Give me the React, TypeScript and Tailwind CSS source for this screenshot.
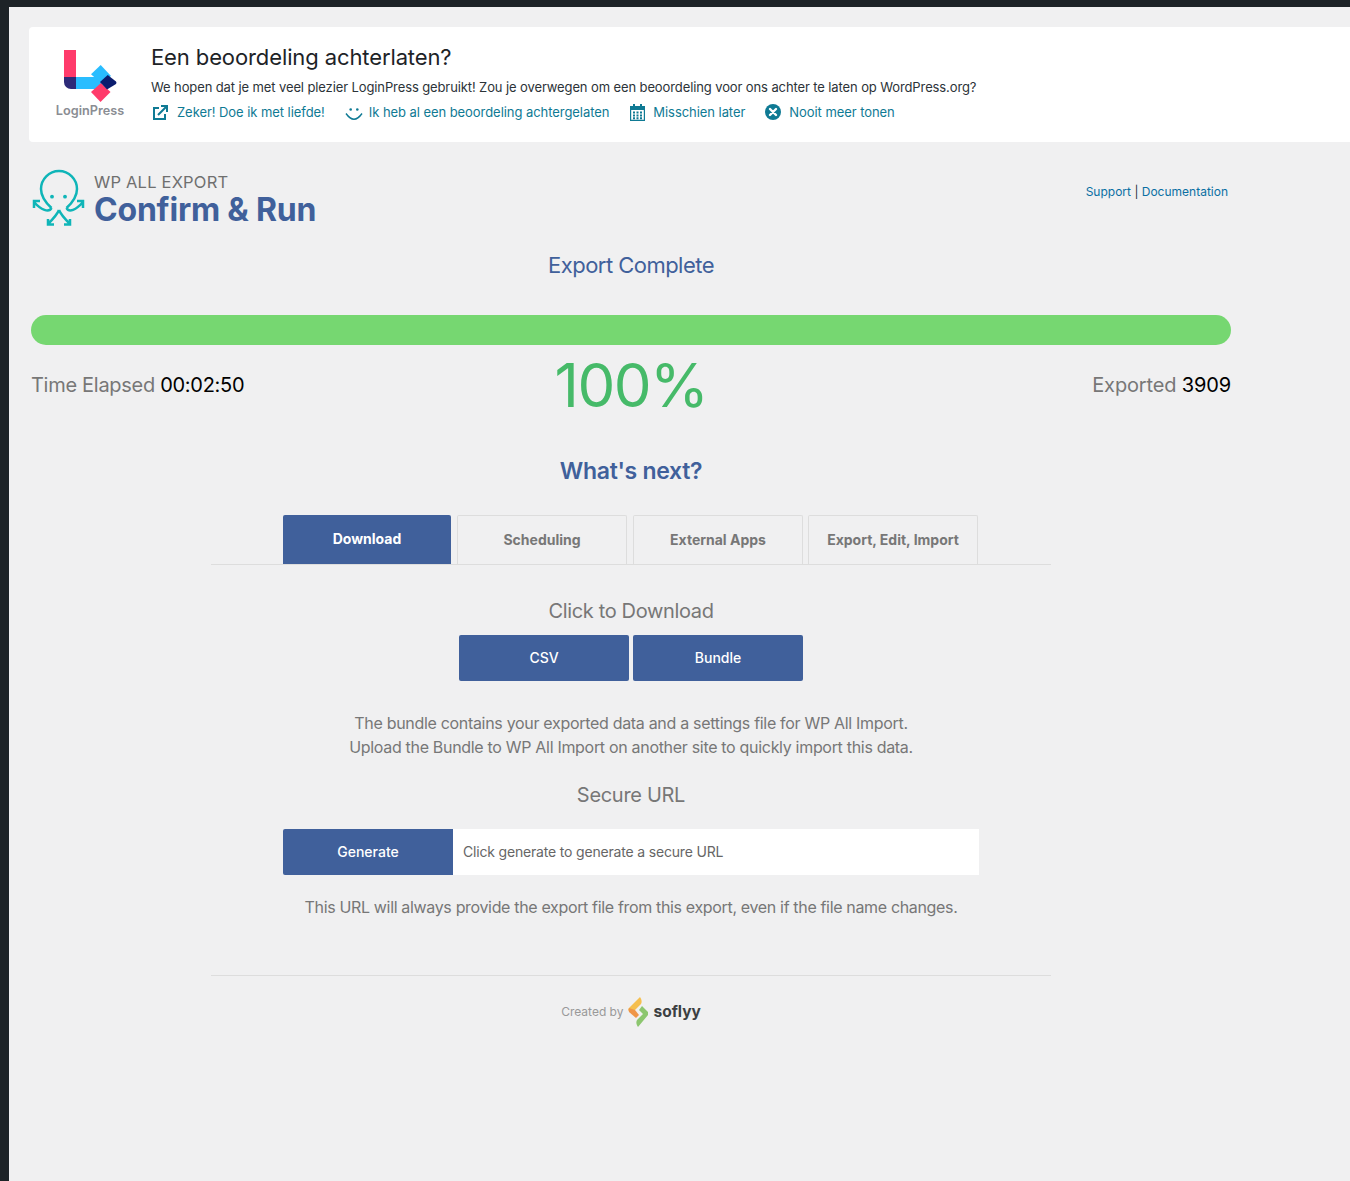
import React from 'react';

const font = "font-['Inter','Liberation_Sans',sans-serif]";

function LoginPressLogo() {
  return (
    <svg width="54" height="54" viewBox="0 0 54 54" className="block">
      <path d="M0 0h12v27H0z" fill="#ff3b6b" />
      <path d="M0 27h12v12H7a7 7 0 0 1-7-7z" fill="#2d2a78" />
      <path d="M12 27h26v12H12z" fill="#29bdff" />
      <path d="M27 24.3L36.7 15 47 26 37 33z" fill="#29bdff" />
      <path d="M27 42l9.5 10 10-10L37 33z" fill="#ff3b6b" />
      <path d="M43.7 25l8.300 6.500a2 2 0 0 1 0 2.500L43 39.500 36 32z" fill="#0b1d6e" />
    </svg>
  );
}

function ExternalIcon() {
  return (
    <svg width="15" height="15" viewBox="0 0 15 15" fill="none" stroke="#0f7a94" strokeWidth="2">
      <path d="M6 3H1v11h11V9" />
      <path d="M5 10l8-8M8 1h6v6" />
    </svg>
  );
}

function SmileIcon() {
  return (
    <svg width="18" height="13" viewBox="0 0 18 13" fill="none" stroke="#0f7a94" className="mt-[4px]">
      <circle cx="5.700" cy="1.500" r="1.300" fill="#0f7a94" stroke="none" />
      <circle cx="12.300" cy="1.500" r="1.300" fill="#0f7a94" stroke="none" />
      <path d="M1 5.500Q9 17 17 5.500" strokeWidth="1.400" />
    </svg>
  );
}

function CalendarIcon() {
  return (
    <svg width="17" height="18" viewBox="0 0 17 18" fill="#0f7a94">
      <path d="M1 3h15v15H1zM2.200 7v9.800h12.600V7z" fillRule="evenodd" />
      <path d="M4 1h2v4H4zM11 1h2v4h-2z" />
      <path d="M4 8.500h2v2H4zM7.500 8.500h2v2h-2zM11 8.500h2v2h-2zM4 11.500h2v2H4zM7.500 11.500h2v2h-2zM11 11.500h2v2h-2zM4 14.200h2v2H4zM7.500 14.200h2v2h-2zM11 14.200h2v2h-2z" />
    </svg>
  );
}

function CloseCircleIcon() {
  return (
    <svg width="16" height="16" viewBox="0 0 16 16">
      <circle cx="8" cy="8" r="8" fill="#0f7a94" />
      <path d="M5 5l6 6M11 5l-6 6" stroke="#fff" strokeWidth="2.400" strokeLinecap="round" />
    </svg>
  );
}

function OctopusLogo() {
  return (
    <svg width="56" height="60" viewBox="0 -1 56 60" fill="none" stroke="#0fb5b8" strokeWidth="2.500" className="block">
      <path d="M20.500 39C15 34 10 28 10 20a18 18 0 0 1 36 0c0 8-5 14-10.500 19" />
      <circle cx="21" cy="27.700" r="1.900" fill="#0fb5b8" stroke="none" />
      <circle cx="34" cy="27.700" r="1.900" fill="#0fb5b8" stroke="none" />
      <path d="M20.500 39C18 44 10 41 3 33M3 39v-7h6" />
      <path d="M35.500 39C38 44 45 41 52 33M52 39v-7h-6" />
      <path d="M28 41c-2 5-6 9-11 14M17 50v5.500h6" />
      <path d="M28 41c2 5 6 9 11 14M39 50v5.500h-6" />
    </svg>
  );
}

function SoflyyLogo() {
  return (
    <svg width="20" height="32" viewBox="0 0 20 32" className="block">
      <path d="M12 1c2 3 2 5 1 7L7 14 1 15c-1-1-1-2 0-3z" fill="#f5bf4f" />
      <path d="M1 12l6 2 4 5-3 3-7-6c-.5-1-.5-3 0-4z" fill="#ef9648" />
      <path d="M14 10l6 6c.5 1 .5 2 0 3L10 31c-2-3-2-5-1-7l6-6-4-4z" fill="#8cc66f" />
    </svg>
  );
}

const actions = [
  { icon: <ExternalIcon />, label: 'Zeker! Doe ik met liefde!', gap: 'gap-[9px]' },
  { icon: <SmileIcon />, label: 'Ik heb al een beoordeling achtergelaten', gap: 'gap-[6px]' },
  { icon: <CalendarIcon />, label: 'Misschien later', gap: 'gap-[7px]' },
  { icon: <CloseCircleIcon />, label: 'Nooit meer tonen', gap: 'gap-[8px]' },
];

const tabs = [
  { label: 'Download', cls: 'w-[168px] bg-[#40609b] text-white' },
  { label: 'Scheduling', cls: 'ml-[6px] w-[170px] border border-b-0 border-[#ddd] text-[#777]' },
  { label: 'External Apps', cls: 'ml-[6px] w-[170px] border border-b-0 border-[#ddd] text-[#777]' },
  { label: 'Export, Edit, Import', cls: 'ml-[5px] w-[170px] border border-b-0 border-[#ddd] text-[#777]' },
];

export default function App() {
  return (
    <div className={`${font} min-h-[1181px] bg-[#f0f0f1] border-t-[7px] border-l-[9px] border-[#1d2327] antialiased overflow-hidden`}>
      {/* review notice */}
      <div className="mt-[20px] ml-[20px] h-[115px] bg-white rounded-l-[4px] flex">
        <div className="w-[122px] shrink-0 flex flex-col items-center pt-[23px]">
          <div className="ml-[2px] w-[54px]"><LoginPressLogo /></div>
          <span className="-mt-[1px] text-[12.700px] leading-[16px] font-semibold text-[#8a8d93]">LoginPress</span>
        </div>
        <div className="pt-[16px]">
          <h2 className="text-[22px] leading-[28px] tracking-[-0.11px] text-[#1d2327]">Een beoordeling achterlaten?</h2>
          <p className="mt-[7px] text-[13px] leading-[18px] tracking-[-0.11px] text-[#2c3338]">
            We hopen dat je met veel plezier LoginPress gebruikt! Zou je overwegen om een beoordeling voor ons achter te laten op WordPress.org?
          </p>
          <div className="mt-[6px] ml-[2px] flex gap-[20px] text-[13px] leading-[20px] tracking-[-0.06px] text-[#0f7a94]">
            {actions.map((a) => (
              <span key={a.label} className={`flex items-center ${a.gap}`}>
                {a.icon}
                {a.label}
              </span>
            ))}
          </div>
        </div>
      </div>

      {/* plugin page */}
      <div className="ml-[22px] w-[1200px]">
        <div className="mt-[26px] flex justify-between">
          <div className="flex">
            <OctopusLogo />
            <div className="ml-[7px] pt-[4px]">
              <div className="text-[16.500px] leading-[20px] tracking-[0.2px] text-[#6f6f6f]">WP ALL EXPORT</div>
              <h1 className="text-[32px] leading-[36px] font-bold tracking-[-0.2px] text-[#40609b]">Confirm &amp; Run</h1>
            </div>
          </div>
          <div className="pt-[16px] pr-[3px] text-[12px] leading-[16px] text-[#2c3338]">
            <span className="text-[#0a6fa3]">Support</span> | <span className="text-[#0a6fa3]">Documentation</span>
          </div>
        </div>

        <div className="mt-[22px] text-center text-[22px] leading-[30px] tracking-[-0.53px] text-[#40609b]">Export Complete</div>

        <div className="mt-[35px] h-[30px] rounded-[15px] bg-[#76d771]" />

        <div className="mt-[4px] h-[72px] flex items-center justify-between text-[20px]">
          <div className="w-[300px] tracking-[-0.29px] text-[#777]">Time Elapsed <span className="text-black">00:02:50</span></div>
          <div className="text-[60px] leading-[72px] tracking-[-1.500px] text-[#46ba69]">100%</div>
          <div className="w-[300px] text-right tracking-[-0.15px] text-[#777]">Exported <span className="text-black">3909</span></div>
        </div>

        <h3 className="mt-[35px] text-center text-[23px] leading-[30px] font-semibold tracking-[-0.3px] text-[#40609b]">What's next?</h3>

        <div className="mx-auto mt-[29px] w-[840px] border-b border-[#ddd] h-[50px] flex justify-center pr-[1px]">
          {tabs.map((t) => (
            <div key={t.label} className={`h-[49px] pb-[2px] flex items-center justify-center rounded-t-[2px] text-[14px] font-bold ${t.cls}`}>
              {t.label}
            </div>
          ))}
        </div>

        <div className="mt-[32px] text-center text-[20px] leading-[28px] tracking-[-0.35px] text-[#777]">Click to Download</div>
        <div className="mt-[10px] flex justify-center gap-[4px]">
          <div className="w-[170px] h-[46px] pb-[1px] flex items-center justify-center rounded-[2px] bg-[#40609b] text-white text-[14px] font-medium">CSV</div>
          <div className="w-[170px] h-[46px] pb-[1px] flex items-center justify-center rounded-[2px] bg-[#40609b] text-white text-[14px] font-medium">Bundle</div>
        </div>

        <p className="mt-[30px] text-center text-[16px] leading-[24px] tracking-[-0.31px] text-[#777]">
          The bundle contains your exported data and a settings file for WP All Import.<br />
          Upload the Bundle to WP All Import on another site to quickly import this data.
        </p>

        <div className="mt-[22px] text-center text-[20px] leading-[28px] tracking-[-0.3px] text-[#777]">Secure URL</div>

        <div className="mt-[20px] mx-auto w-[696px] h-[46px] flex">
          <div className="w-[170px] pb-[1px] flex items-center justify-center rounded-l-[2px] bg-[#40609b] text-white text-[14px] font-medium">Generate</div>
          <div className="flex-1 pb-[1px] flex items-center bg-white pl-[10px] text-[14px] tracking-[-0.18px] text-[#666]">Click generate to generate a secure URL</div>
        </div>

        <p className="mt-[20px] text-center text-[16px] leading-[24px] tracking-[-0.34px] text-[#777]">
          This URL will always provide the export file from this export, even if the file name changes.
        </p>

        <div className="mx-auto mt-[56px] w-[840px] border-t border-[#ddd] pt-[20px] flex items-center justify-center">
          <span className="text-[12px] text-[#999]">Created by</span>
          <span className="ml-[5px]"><SoflyyLogo /></span>
          <span className="ml-[5px] text-[15.500px] leading-[20px] font-bold text-[#3c3f42]">soflyy</span>
        </div>
      </div>
    </div>
  );
}
